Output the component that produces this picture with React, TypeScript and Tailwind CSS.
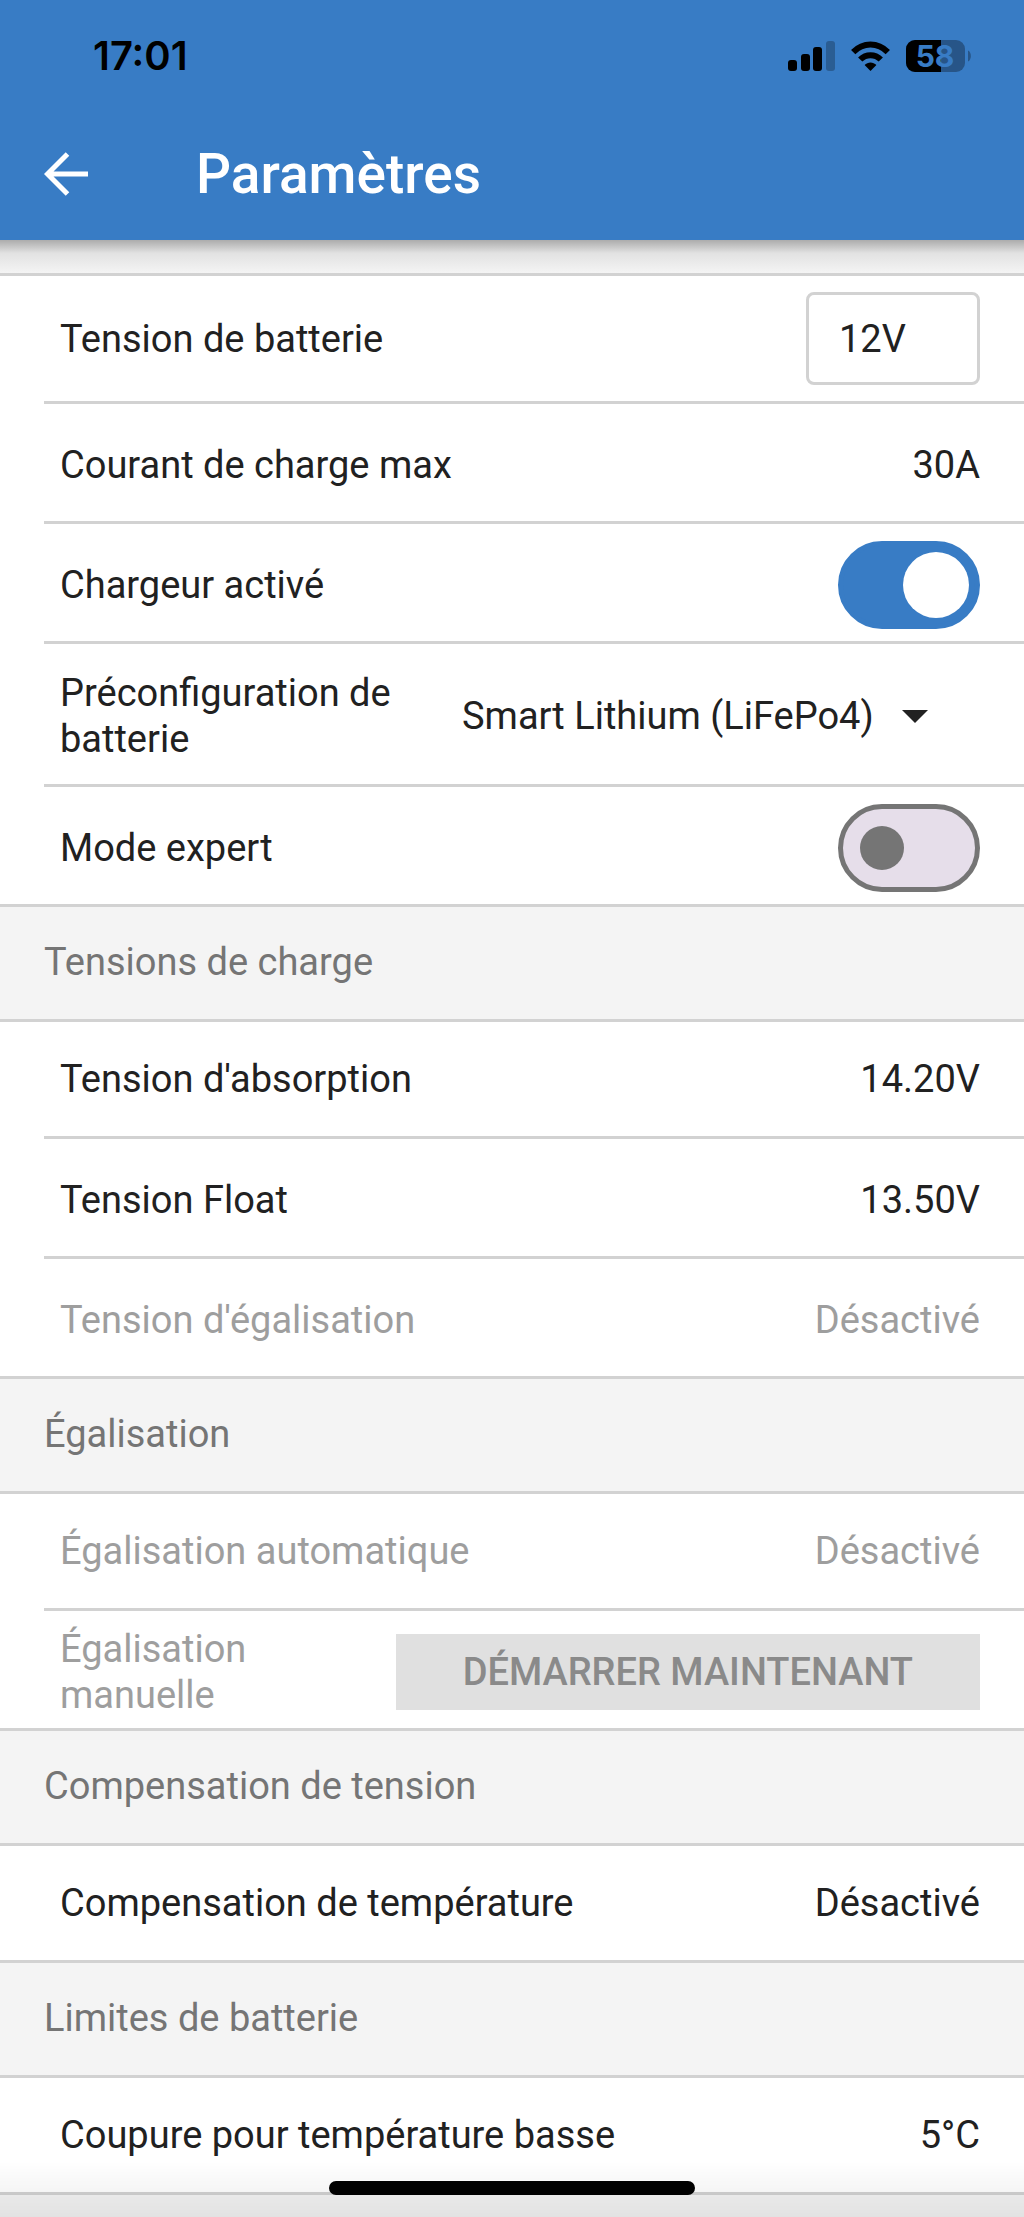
import { FC, ReactNode, useState } from 'react';
import clsx from 'clsx';

interface SectionProps {
  title?: string;
  children: ReactNode;
}

interface RowProps {
  label: string;
  htmlFor?: string;
  disabled?: boolean;
  children: ReactNode;
}

interface ToggleProps {
  id: string;
  checked: boolean;
  onChange: (checked: boolean) => void;
}

const StatusBar: FC = () => (
  <div className="flex h-28 items-center justify-between pr-[52px] pl-[93px] text-black">
    <p className="font-[Inter,sans-serif] text-[40px] leading-[46px] font-semibold">
      17:01
    </p>
    <div className="flex items-center gap-4">
      <svg width="47" height="30" viewBox="0 0 47 30" aria-hidden="true">
        <rect x="0" y="19" width="9" height="11" rx="3" />
        <rect x="13" y="13" width="9" height="17" rx="3" />
        <rect x="25" y="6" width="9" height="24" rx="3" />
        <rect x="38" y="0" width="9" height="30" rx="3" opacity="0.25" />
      </svg>
      <svg width="39" height="30" viewBox="0 0 39 30" aria-hidden="true">
        <g fill="none" stroke="#000" strokeWidth="6">
          <path d="M2.2 11.2C12 1 27 1 36.8 11.2" />
          <path d="M9.2 18.5C15 12.7 24 12.7 29.8 18.5" />
        </g>
        <path d="M19.5 30L13.6 24C16.8 20.6 22.2 20.6 25.4 24Z" />
      </svg>
      <svg width="66" height="34" viewBox="0 0 66 34" role="img" aria-label="58">
        <defs>
          <clipPath id="battery">
            <rect x="0" y="1" width="59" height="32" rx="9" />
          </clipPath>
        </defs>
        <g clipPath="url(#battery)">
          <rect width="59" height="34" fill="#275588" />
          <rect width="35" height="34" fill="#000" />
        </g>
        <path d="M62 11.5C65.8 13 65.8 21 62 22.5Z" fill="#275588" />
        <text
          x="29"
          y="28"
          textAnchor="middle"
          className="fill-[#387cc5] font-[Inter,sans-serif] text-[30px] font-bold"
        >
          58
        </text>
      </svg>
    </div>
  </div>
);

const Header: FC = () => (
  <header className="bg-[#387cc5]">
    <StatusBar />
    <div className="flex h-32 items-center gap-[108px] px-11 pb-1 text-white">
      <button type="button" aria-label="Retour">
        <svg
          width="44"
          height="44"
          viewBox="0 0 44 44"
          fill="none"
          stroke="currentColor"
          strokeWidth="5"
        >
          <path d="M44 22H4M23.5 2L3.5 22L23.5 42" />
        </svg>
      </button>
      <h1 className="text-[55px] leading-[64px] font-medium">Paramètres</h1>
    </div>
  </header>
);

const Section: FC<SectionProps> = ({ title, children }) => (
  <section>
    {title && (
      <h2 className="border-b-3 border-[#d2d2d2] px-11 pt-8 pb-[34px] text-[#757575]">
        {title}
      </h2>
    )}
    <div className="border-b-3 border-[#d2d2d2] bg-white pl-11 [&>*+*]:border-t-3">
      {children}
    </div>
  </section>
);

const Row: FC<RowProps> = ({ label, htmlFor, disabled, children }) => (
  <div
    className={clsx(
      'flex min-h-[114px] items-center justify-between gap-8 border-[#d2d2d2] pr-11 pl-4 [&+&]:min-h-[120px] [&+&]:pt-1',
      disabled ? 'text-[#9e9e9e]' : 'text-[#212121]',
    )}
  >
    {htmlFor ? (
      <label htmlFor={htmlFor} className="flex-1">
        {label}
      </label>
    ) : (
      <p className="flex-1">{label}</p>
    )}
    {children}
  </div>
);

const Toggle: FC<ToggleProps> = ({ id, checked, onChange }) => (
  <input
    id={id}
    type="checkbox"
    role="switch"
    checked={checked}
    onChange={(e) => onChange(e.target.checked)}
    className="flex h-[88px] w-[142px] appearance-none items-center rounded-full border-5 border-[#757575] bg-[#e6deea] px-[17px] before:size-11 before:rounded-full before:bg-[#757575] checked:justify-end checked:border-[#387cc5] checked:bg-[#387cc5] checked:px-[6px] checked:before:size-[66px] checked:before:bg-white"
  />
);

const App: FC = () => {
  const [voltage, setVoltage] = useState<string>('12V');
  const [charger, setCharger] = useState<boolean>(true);
  const [expert, setExpert] = useState<boolean>(false);

  return (
    <div className="min-h-screen bg-[#f4f4f4] font-[Roboto,sans-serif] text-[38px] leading-[46px]">
      <Header />
      <div className="h-9 border-b-3 border-[#d2d2d2] bg-linear-to-b from-[#acacac] via-[#e2e2e2] via-40% to-[#f4f4f4]" />
      <main>
        <Section>
          <Row label="Tension de batterie" htmlFor="voltage">
            <div className="py-4">
              <input
                id="voltage"
                type="text"
                value={voltage}
                onChange={(e) => setVoltage(e.target.value)}
                className="block h-[93px] w-[174px] rounded-lg border-3 border-[#d2d2d2] px-[30px]"
              />
            </div>
          </Row>
          <Row label="Courant de charge max">
            <p>30A</p>
          </Row>
          <Row label="Chargeur activé" htmlFor="charger">
            <Toggle id="charger" checked={charger} onChange={setCharger} />
          </Row>
          <Row label="Préconfiguration de batterie" htmlFor="preset">
            <div className="relative flex items-center py-[45px]">
              <select id="preset" className="appearance-none pr-[106px]">
                <option>Smart Lithium (LiFePo4)</option>
              </select>
              <svg
                width="26"
                height="13"
                viewBox="0 0 26 13"
                className="pointer-events-none absolute right-[52px] fill-[#212121]"
                aria-hidden="true"
              >
                <path d="M0 0H26L13 13Z" />
              </svg>
            </div>
          </Row>
          <Row label="Mode expert" htmlFor="expert">
            <Toggle id="expert" checked={expert} onChange={setExpert} />
          </Row>
        </Section>
        <Section title="Tensions de charge">
          <Row label="Tension d'absorption">
            <p>14.20V</p>
          </Row>
          <Row label="Tension Float">
            <p>13.50V</p>
          </Row>
          <Row label="Tension d'égalisation" disabled>
            <p>Désactivé</p>
          </Row>
        </Section>
        <Section title="Égalisation">
          <Row label="Égalisation automatique" disabled>
            <p>Désactivé</p>
          </Row>
          <Row label="Égalisation manuelle" disabled>
            <button
              type="button"
              disabled
              className="h-[76px] bg-[#e0e0e0] px-[67px] font-medium text-[#8a8a8a]"
            >
              DÉMARRER MAINTENANT
            </button>
          </Row>
        </Section>
        <Section title="Compensation de tension">
          <Row label="Compensation de température">
            <p>Désactivé</p>
          </Row>
        </Section>
        <Section title="Limites de batterie">
          <Row label="Coupure pour température basse">
            <p>5°C</p>
          </Row>
        </Section>
      </main>
      <div className="pointer-events-none fixed inset-x-0 bottom-0 flex h-14 justify-center bg-linear-to-b from-transparent to-black/7 pt-5">
        <div className="h-[14px] w-[366px] rounded-full bg-black" />
      </div>
    </div>
  );
};

export default App;
